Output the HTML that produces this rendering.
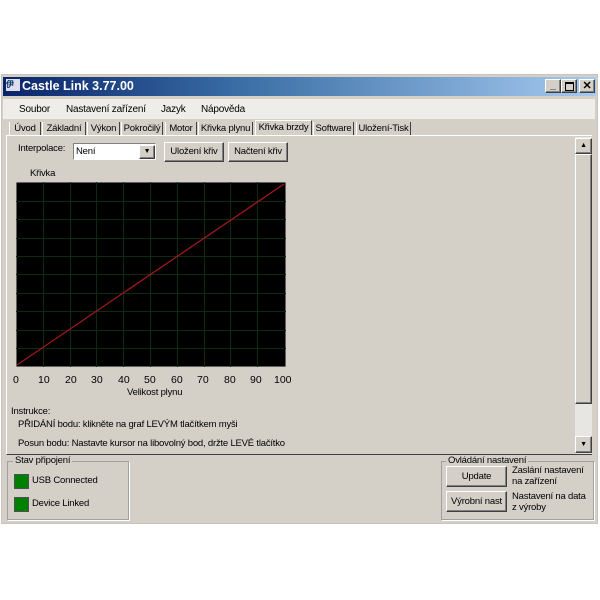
<!DOCTYPE html><html><head><style>
body{margin:0;width:600px;height:600px;background:#fff;position:relative;font-family:"Liberation Sans",sans-serif;font-size:9.5px;color:#000;overflow:hidden;letter-spacing:-0.2px}
.a{position:absolute;white-space:nowrap}
.win{left:1px;top:74px;width:597px;height:450px;background:#d4d0c8;border:1px solid #c8c4bc;box-sizing:border-box}
.btn{position:absolute;background:#d4d0c8;border:1px solid;border-color:#fff #404040 #404040 #fff;box-shadow:inset -1px -1px #808080;text-align:center;box-sizing:border-box;white-space:nowrap}
.tab{position:absolute;top:122px;height:14px;line-height:13px;border-left:1px solid #fff;border-right:1px solid #404040;text-align:center;box-sizing:border-box;font-size:9.5px;white-space:nowrap}
.grp{position:absolute;border:1px solid #a0a0a0;box-shadow:1px 1px #fff}
.led{position:absolute;width:13px;height:13px;background:#008000;border:1px solid #505050}
</style></head><body>
<div class="a win"></div>
<div class="a" style="left:3px;top:77px;width:593px;height:19px;background:linear-gradient(90deg,#0a246a,#3a6ea5 40%,#a6caf0)"></div>
<div class="a" style="left:6px;top:79px;width:14px;height:12px;background:#dde;color:#036;font-size:8px;font-weight:bold;line-height:12px">伊</div>
<div class="a" style="left:22px;top:78px;color:#fff;font-weight:bold;font-size:12.5px;line-height:17px;letter-spacing:0">Castle Link 3.77.00</div>
<div class="btn" style="left:545px;top:79px;width:16px;height:14px;font-size:10px;line-height:12px;font-weight:bold">_</div>
<div class="btn" style="left:561px;top:79px;width:16px;height:14px"><div class="a" style="left:3px;top:2px;width:7px;height:6px;border:1px solid #000;border-top-width:2px"></div></div>
<div class="btn" style="left:579px;top:79px;width:16px;height:14px;font-size:11px;line-height:12px;font-weight:bold">✕</div>
<div class="a" style="left:3px;top:99px;width:592px;height:20px;background:#eeede9"></div>
<div class="a" style="left:19px;top:104px;font-size:10px">Soubor</div>
<div class="a" style="left:66px;top:104px;font-size:10px">Nastavení zařízení</div>
<div class="a" style="left:161px;top:104px;font-size:10px">Jazyk</div>
<div class="a" style="left:201px;top:104px;font-size:10px">Nápověda</div>
<div class="tab" style="left:9px;width:32px">Úvod</div>
<div class="tab" style="left:42px;width:44px">Základní</div>
<div class="tab" style="left:87px;width:33px">Výkon</div>
<div class="tab" style="left:121px;width:42px">Pokročilý</div>
<div class="tab" style="left:165px;width:32px">Motor</div>
<div class="tab" style="left:198px;width:55px">Křivka plynu</div>
<div class="tab" style="left:255px;width:57px;top:120px;border-top:1px solid #fff;height:15px;background:#d4d0c8">Křivka brzdy</div>
<div class="tab" style="left:313px;width:41px">Software</div>
<div class="tab" style="left:356px;width:55px">Uložení-Tisk</div>
<div class="a" style="left:6px;top:135px;width:586px;height:320px;border-top:1px solid #fff;border-left:1px solid #fff;border-bottom:1px solid #404040;box-sizing:border-box"></div>
<div class="a" style="left:18px;top:143px">Interpolace:</div>
<div class="a" style="left:73px;top:143px;width:83px;height:17px;background:#fff;border:1px solid;border-color:#808080 #fff #fff #808080;box-sizing:border-box;padding-left:2px;line-height:15px">Není</div>
<div class="btn" style="left:139px;top:145px;width:16px;height:14px;font-size:7px;line-height:12px">▼</div>
<div class="btn" style="left:164px;top:142px;width:60px;height:20px;line-height:18px">Uložení křiv</div>
<div class="btn" style="left:228px;top:142px;width:60px;height:20px;line-height:18px">Načtení křiv</div>
<div class="a" style="left:30px;top:168px">Křivka</div>
<svg class="a" style="left:16px;top:182px" width="270" height="185">
<rect x="0" y="0" width="270" height="185" fill="#000" stroke="#c0c0c0"/>
<g stroke="#0a2a12" stroke-width="1">
<path d="M27.5 0V185M54.5 0V185M80.5 0V185M107.5 0V185M134.5 0V185M161.5 0V185M188.5 0V185M214.5 0V185M241.5 0V185"/>
<path d="M0 19.5H270M0 37.5H270M0 56.5H270M0 74.5H270M0 92.5H270M0 111.5H270M0 129.5H270M0 148.5H270M0 166.5H270"/>
</g>
<line x1="1" y1="183" x2="268" y2="2" stroke="#a01818" stroke-width="1.3"/>
</svg>
<div class="a" style="left:13px;top:374px;width:280px;font-size:10.5px;letter-spacing:0">
<span class="a" style="left:0">0</span><span class="a" style="left:25px">10</span><span class="a" style="left:52px">20</span><span class="a" style="left:78px">30</span><span class="a" style="left:105px">40</span><span class="a" style="left:131px">50</span><span class="a" style="left:158px">60</span><span class="a" style="left:184px">70</span><span class="a" style="left:211px">80</span><span class="a" style="left:237px">90</span><span class="a" style="left:261px">100</span></div>
<div class="a" style="left:127px;top:387px">Velikost plynu</div>
<div class="a" style="left:11px;top:406px">Instrukce:</div>
<div class="a" style="left:18px;top:419px">PŘIDÁNÍ bodu: klikněte na graf LEVÝM tlačítkem myši</div>
<div class="a" style="left:18px;top:438px">Posun bodu: Nastavte kursor na libovolný bod, držte LEVÉ tlačítko</div>
<div class="a" style="left:575px;top:137px;width:17px;height:317px;background:#e8e6e2"></div>
<div class="btn" style="left:575px;top:138px;width:17px;height:16px;font-size:7px;line-height:14px">▲</div>
<div class="btn" style="left:575px;top:154px;width:17px;height:250px"></div>
<div class="btn" style="left:575px;top:436px;width:17px;height:17px;font-size:7px;line-height:15px">▼</div>
<div class="grp" style="left:7px;top:461px;width:120px;height:57px"></div>
<div class="a" style="left:13px;top:455px;background:#d4d0c8;padding:0 2px">Stav připojení</div>
<div class="led" style="left:14px;top:474px"></div><div class="a" style="left:32px;top:475px">USB Connected</div>
<div class="led" style="left:14px;top:497px"></div><div class="a" style="left:32px;top:498px">Device Linked</div>
<div class="grp" style="left:441px;top:461px;width:151px;height:57px"></div>
<div class="a" style="left:446px;top:455px;background:#d4d0c8;padding:0 2px">Ovládání nastavení</div>
<div class="btn" style="left:446px;top:466px;width:61px;height:21px;line-height:19px">Update</div>
<div class="btn" style="left:446px;top:491px;width:61px;height:21px;line-height:19px">Výrobní nast</div>
<div class="a" style="left:512px;top:465px;line-height:11px">Zaslání nastavení<br>na zařízení</div>
<div class="a" style="left:512px;top:491px;line-height:11px">Nastavení na data<br>z výroby</div>
</body></html>
